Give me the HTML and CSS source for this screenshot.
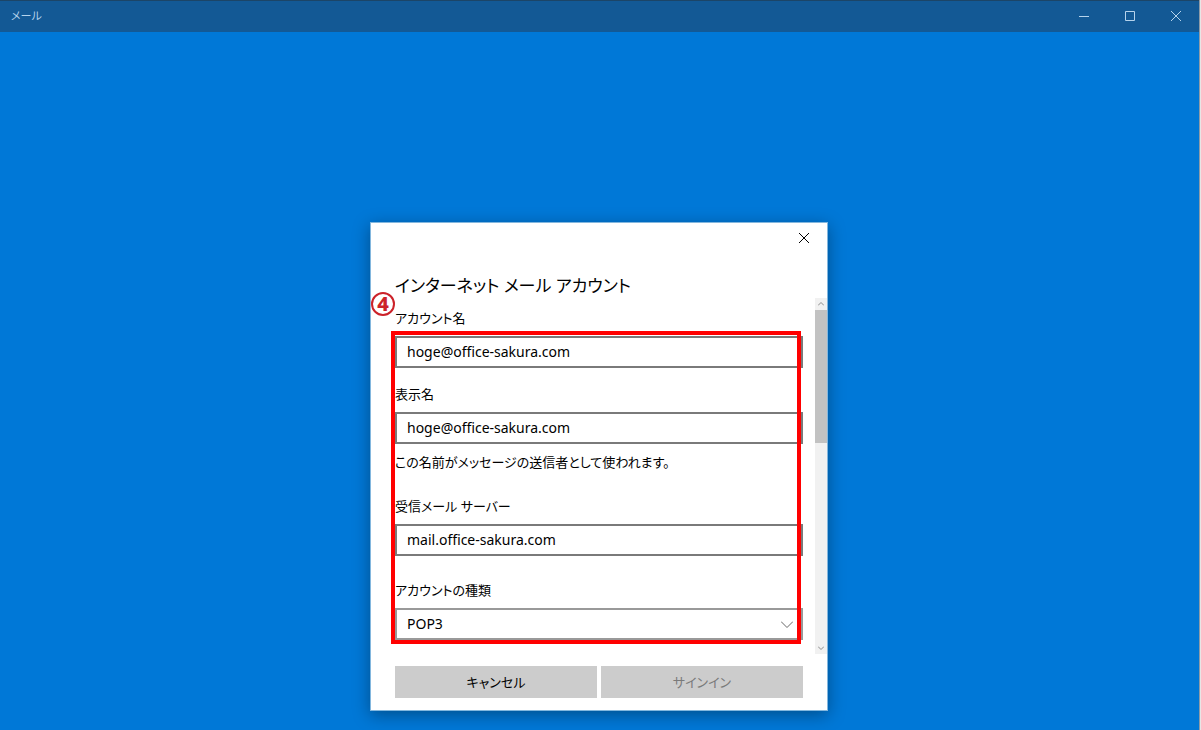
FILE: index.html
```html
<!DOCTYPE html>
<html lang="ja">
<head>
    <meta charset="UTF-8">
    <meta name="viewport" content="width=device-width, initial-scale=1.0">
    <title>メール</title>
    <link rel="stylesheet" href="styles.css">
</head>
<body>
    <div class="window">
        <header class="titlebar">
            <span class="app-name">メール</span>
            <div class="window-buttons">
                <button type="button" aria-label="最小化">
                    <svg width="10" height="10" viewBox="0 0 10 10"><path d="M0 5.5h10"/></svg>
                </button>
                <button type="button" aria-label="最大化">
                    <svg width="10" height="10" viewBox="0 0 10 10"><path d="M.5 .5h9v9h-9z"/></svg>
                </button>
                <button type="button" aria-label="閉じる">
                    <svg width="10" height="10" viewBox="0 0 10 10"><path d="M0 0l10 10M10 0L0 10"/></svg>
                </button>
            </div>
        </header>
        <main class="backdrop">
            <form class="dialog" role="dialog" aria-labelledby="dialogTitle">
                <button type="button" class="dialog-close" aria-label="閉じる">
                    <svg width="10" height="10" viewBox="0 0 10 10"><path d="M0 0l10 10M10 0L0 10"/></svg>
                </button>
                <h1 id="dialogTitle">インターネット メール アカウント</h1>
                <div class="scroll-area">
                    <div class="fields">
                        <div class="field">
                            <label for="accountName">アカウント名</label>
                            <input type="text" id="accountName" name="accountName" value="hoge@office-sakura.com">
                        </div>
                        <div class="field has-hint">
                            <label for="displayName">表示名</label>
                            <input type="text" id="displayName" name="displayName" value="hoge@office-sakura.com">
                            <p class="hint">この名前がメッセージの送信者として使われます。</p>
                        </div>
                        <div class="field has-hint">
                            <label for="mailServer">受信メール サーバー</label>
                            <input type="text" id="mailServer" name="mailServer" value="mail.office-sakura.com">
                        </div>
                        <div class="field">
                            <label for="accountType">アカウントの種類</label>
                            <div class="select-box">
                                <select id="accountType" name="accountType">
                                    <option selected>POP3</option>
                                    <option>IMAP4</option>
                                </select>
                                <svg width="12" height="7" viewBox="0 0 12 7"><path d="M0 .5l6 6 6-6"/></svg>
                            </div>
                        </div>
                        <div class="marker-frame"></div>
                        <span class="marker-number">4</span>
                    </div>
                    <div class="scrollbar">
                        <svg width="6" height="4" viewBox="0 0 6 4"><path d="M0 3.5l3-3 3 3"/></svg>
                        <div class="track"><div class="thumb"></div></div>
                        <svg width="6" height="4" viewBox="0 0 6 4"><path d="M0 .5l3 3 3-3"/></svg>
                    </div>
                </div>
                <div class="actions">
                    <button type="button">キャンセル</button>
                    <button type="submit" disabled>サインイン</button>
                </div>
            </form>
        </main>
    </div>
</body>
</html>
```
FILE: styles.css
```css
* {
    box-sizing: border-box;
}
body {
    margin: 0;
    font-family: "Noto Sans", "Noto Sans CJK JP", sans-serif;
    font-size: 13px;
    line-height: 20px;
    font-feature-settings: "palt";
    color: #000000;
    background-color: #e6e6e6;
}
button, input, select {
    font: inherit;
    font-feature-settings: inherit;
    color: inherit;
    margin: 0;
    border-radius: 0;
}
svg {
    display: block;
    fill: none;
    stroke: currentColor;
    stroke-width: 1;
}
.window {
    display: flex;
    flex-direction: column;
    min-height: 100vh;
    margin-right: 1px;
    border-right: 1px solid #8f9ba6;
    background-color: #0078d7;
}
.titlebar {
    display: flex;
    justify-content: space-between;
    height: 32px;
    padding-left: 11px;
    border-top: 1px solid #1c4567;
    background-color: #135995;
    color: #b5d3ec;
}
.app-name {
    font-size: 11px;
    line-height: 30px;
}
.window-buttons {
    display: flex;
}
.window-buttons button, .dialog-close {
    display: flex;
    justify-content: center;
    align-items: center;
    width: 46px;
    height: 30px;
    padding: 0;
    border: none;
    background: none;
}
.backdrop {
    flex: 1;
    display: flex;
    justify-content: center;
    align-items: flex-end;
    padding: 0 1px 19px 0;
}
.dialog {
    display: flex;
    flex-direction: column;
    width: 100%;
    max-width: 458px;
    border: 1px solid #83b7de;
    background-color: #ffffff;
    box-shadow: 0 4px 16px rgba(0,0,0,0.35);
}
.dialog-close {
    align-self: flex-end;
}
h1 {
    margin: 20px 24px 0;
    font-size: 17px;
    font-weight: 400;
    line-height: 25px;
}
.scroll-area {
    display: flex;
    gap: 12px;
    padding-left: 24px;
}
.fields {
    position: relative;
    flex: 1;
    padding: 10px 0 14px;
}
.field {
    display: flex;
    flex-direction: column;
    gap: 8px;
    margin-bottom: 16px;
}
.field.has-hint {
    margin-bottom: 24px;
}
.field:nth-child(4) {
    margin-bottom: 0;
}
.hint {
    margin: 0;
}
input, select {
    width: 100%;
    height: 32px;
    padding: 0 10px 1px;
    border: 2px solid #7a7a7a;
    background-color: #ffffff;
    font-size: 14px;
}
.select-box {
    position: relative;
}
select {
    display: block;
    appearance: none;
    border-color: #999999;
}
.select-box svg {
    position: absolute;
    top: 13px;
    right: 10px;
    color: #666666;
    pointer-events: none;
}
/* red step marker drawn over the form */
.marker-frame {
    position: absolute;
    top: 33px;
    right: 2px;
    bottom: 10px;
    left: -4px;
    border: 4px solid #ff0000;
    pointer-events: none;
}
.marker-number {
    position: absolute;
    top: -6px;
    left: -24px;
    width: 24px;
    height: 24px;
    border: 2px solid #cc2229;
    border-radius: 50%;
    color: #cc2229;
    font-size: 20px;
    font-weight: 800;
    line-height: 20px;
    text-align: center;
}
.scrollbar {
    display: flex;
    flex-direction: column;
    align-items: center;
    width: 12px;
    padding: 4px 0;
    gap: 4px;
    background-color: #f1f1f1;
    color: #8c8c8c;
}
.track {
    flex: 1;
    width: 100%;
}
.thumb {
    height: 40%;
    background-color: #c2c2c2;
}
.actions {
    display: flex;
    gap: 4px;
    padding: 12px 24px;
}
.actions button {
    flex: 1;
    height: 32px;
    padding: 0;
    border: none;
    background-color: #cccccc;
}
.actions button:disabled {
    color: #7a7a7a;
}
```
